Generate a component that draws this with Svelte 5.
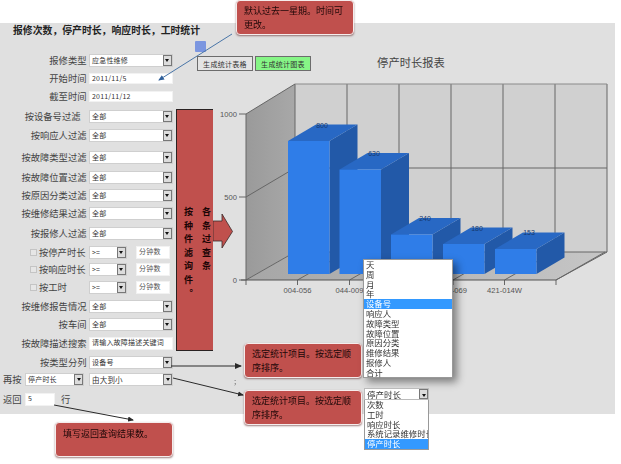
<script>
  // gap = distance from the previous row; rows are 14px high
  const rows = [
    { label: '报修类型', kind: 'sel', value: '应急性维修', gap: 0 },
    { label: '开始时间', kind: 'input', value: '2011/11/5', gap: 4 },
    { label: '截至时间', kind: 'input', value: '2011/11/12', gap: 4 },
    { label: '按设备号过滤', kind: 'sel', value: '全部', gap: 6, indent: true },
    { label: '按响应人过滤', kind: 'sel', value: '全部', gap: 5 },
    { label: '按故障类型过滤', kind: 'sel', value: '全部', gap: 8 },
    { label: '按故障位置过滤', kind: 'sel', value: '全部', gap: 6 },
    { label: '按原因分类过滤', kind: 'sel', value: '全部', gap: 4 },
    { label: '按维修结果过滤', kind: 'sel', value: '全部', gap: 4 },
    { label: '按报修人过滤', kind: 'sel', value: '全部', gap: 6 },
    { label: '按停产时长', kind: 'range', value: '>=', gap: 5, check: true },
    { label: '按响应时长', kind: 'range', value: '>=', gap: 3, check: true },
    { label: '按工时', kind: 'range', value: '>=', gap: 4, check: true },
    { label: '按维修报告情况', kind: 'sel', value: '全部', gap: 5 },
    { label: '按车间', kind: 'sel', value: '全部', gap: 4 },
    { label: '按故障描述搜索', kind: 'input', value: '请输入故障描述关键词', gap: 5, tall: true },
    { label: '按类型分列', kind: 'sel', value: '设备号', gap: 5 }
  ];

  const bars = [
    { x: 288, top: 141, label: '800', lx: 322, ly: 128 },
    { x: 339.5, top: 169.5, label: '630', lx: 374, ly: 156 },
    { x: 391, top: 234.5, label: '240', lx: 425, ly: 221 },
    { x: 443, top: 244, label: '180', lx: 477, ly: 231 },
    { x: 495, top: 249, label: '153', lx: 529, ly: 235 }
  ];
  const W = 41.5, DX = 28, DY = 16.5, BASE = 274;

  const wallX = [295, 347, 399, 451, 503, 555, 607];
  const floorX = [246, 297.5, 349.5, 401, 453, 504.5, 556];
  const cats = [[297.5, '004-056'], [349.5, '044-009'], [401, '004-012'], [453, '004-069'], [504.5, '421-014W']];
  const ticks = [[114, '1000'], [197, '500'], [280, '0']];

  const menu1 = ['天', '周', '月', '年', '设备号', '响应人', '故障类型', '故障位置', '原因分类', '维修结果', '报修人', '合计'];
  const menu2 = ['次数', '工时', '响应时长', '系统记录维修时长', '停产时长'];
</script>

<div class="page">
  <div class="panel">
    <section class="left">
      <h1>报修次数，停产时长，响应时长，工时统计</h1>
      <div class="form">
        {#each rows as r}
          <div class="row" style="margin-top:{r.gap}px">
            {#if r.check}
              <span class="check"></span>
              <label class="chk-label">{r.label}</label>
            {:else}
              <label class="label" class:indent={r.indent}>{r.label}</label>
            {/if}

            {#if r.kind === 'sel'}
              <div class="sel"><span>{r.value}</span><i class="btn"></i></div>
            {:else if r.kind === 'input'}
              <div class="input" class:tall={r.tall}>{r.value}</div>
            {:else}
              <div class="sel short"><span>{r.value}</span><i class="btn"></i></div>
              <div class="input mins">分钟数</div>
            {/if}
          </div>
        {/each}

        <div class="row again">
          <label class="side">再按</label>
          <div class="sel mid"><span>停产时长</span><i class="btn"></i></div>
          <div class="sel order"><span>由大到小</span><i class="btn"></i></div>
        </div>
        <div class="row back">
          <label class="side">返回</label>
          <div class="input num">5</div>
          <label class="unit">行</label>
        </div>
      </div>
    </section>

    <aside class="block">
      <span>各条过查条</span>
      <span>按种件滤询件。</span>
      <svg class="block-arrow" width="22" height="37" viewBox="0 0 22 37">
        <path d="M0 8H9V1L19.500 18.500L9 35V28H0Z" fill="#c0504d" stroke="#3a2a2a" stroke-width="0.8"/>
      </svg>
    </aside>

    <section class="report">
      <div class="tabs">
        <button class="tab">生成统计表格</button>
        <button class="tab on">生成统计图表</button>
      </div>
      <svg class="chart" width="422" height="240" viewBox="193 66 422 240">
        <defs>
          <linearGradient id="side" x1="0" x2="1" y1="0" y2="0">
            <stop offset="0" stop-color="#9a9a9a"/>
            <stop offset="1" stop-color="#a8a8a8"/>
          </linearGradient>
          <linearGradient id="floor" x1="0" x2="1" y1="0" y2="0">
            <stop offset="0" stop-color="#a6a6a6"/>
            <stop offset="1" stop-color="#c6c6c6"/>
          </linearGradient>
        </defs>

        <text class="title" x="411" y="67" text-anchor="middle">停产时长报表</text>

        <!-- walls -->
        <polygon points="295,84 607,84 607,252 295,252" fill="#d0d0d0"/>
        <polygon points="246,114 295,84 295,252 246,280" fill="url(#side)"/>
        <polygon points="246,280 295,252 607,252 556,280" fill="url(#floor)"/>

        {#each wallX as x}
          <line class="grid" x1={x} y1="84" x2={x} y2="252"/>
        {/each}
        <line class="grid" x1="295" y1="168" x2="607" y2="168"/>
        <line class="grid" x1="295" y1="252" x2="607" y2="252"/>
        <line class="edge" x1="295" y1="84" x2="607" y2="84"/>
        <line class="grid" x1="246" y1="197" x2="295" y2="168"/>
        <line class="grid" x1="246" y1="114" x2="295" y2="84"/>
        <line class="grid" x1="246" y1="114" x2="246" y2="280"/>
        <line class="grid" x1="556" y1="280" x2="607" y2="252"/>

        {#each floorX as x}
          <line class="grid" x1={x} y1="280" x2={x + 49} y2="252"/>
          <line class="grid" x1={x} y1="280" x2={x} y2="285"/>
        {/each}
        <line class="axis" x1="241" y1="280" x2="556" y2="280"/>

        {#each ticks as [y, t]}
          <line class="grid" x1="239" y1={y} x2="246" y2={y}/>
          <text class="tick" x="237" y={y + 2.5} text-anchor="end">{t}</text>
        {/each}

        {#each cats as [x, t]}
          <text class="tick" {x} y="293" text-anchor="middle">{t}</text>
        {/each}

        {#each bars as b}
          <polygon fill="#2259a8" points="{b.x + W},{b.top} {b.x + W + DX},{b.top - DY} {b.x + W + DX},{BASE - DY} {b.x + W},{BASE}"/>
          <polygon fill="#2868c4" points="{b.x},{b.top} {b.x + DX},{b.top - DY} {b.x + W + DX},{b.top - DY} {b.x + W},{b.top}"/>
          <rect fill="#2f7de8" x={b.x} y={b.top} width={W} height={BASE - b.top}/>
          <text class="val" x={b.lx} y={b.ly} text-anchor="middle">{b.label}</text>
        {/each}
      </svg>
    </section>
  </div>

  <!-- annotations laid over the form -->
  <i class="marker"></i>
  <svg class="arrows" width="621" height="464" viewBox="0 0 621 464">
    <defs>
      <marker id="head" markerWidth="6" markerHeight="6" refX="5" refY="3" orient="auto">
        <path d="M0 0.500L6 3L0 5.500Z" fill="#2a2a2a"/>
      </marker>
      <marker id="head-blue" markerWidth="6" markerHeight="6" refX="5" refY="3" orient="auto">
        <path d="M0 0.500L6 3L0 5.500Z" fill="#2f5f9a"/>
      </marker>
    </defs>
    <line x1="232" y1="34" x2="159" y2="80" stroke="#4a76a8" stroke-width="1" marker-end="url(#head-blue)"/>
    <line x1="171" y1="366" x2="241" y2="366" stroke="#2a2a2a" stroke-width="1.2" marker-end="url(#head)"/>
    <line x1="173" y1="378" x2="243" y2="395" stroke="#2a2a2a" stroke-width="1" marker-end="url(#head)"/>
    <line x1="54" y1="405" x2="133" y2="420" stroke="#2a2a2a" stroke-width="1" marker-end="url(#head)"/>
  </svg>

  <div class="note n1">默认过去一星期。时间可更改。</div>
  <div class="note n2">选定统计项目。按选定顺序排序。</div>
  <div class="note n3">选定统计项目。按选定顺序排序。</div>
  <div class="note n4">填写返回查询结果数。</div>
  <span class="semi">;</span>

  <ul class="menu m1">
    {#each menu1 as item}
      <li class:hit={item === '设备号'}>{item}</li>
    {/each}
  </ul>

  <div class="drop">
    <div class="sel drop-sel"><span>停产时长</span><i class="btn"></i></div>
    <ul class="menu m2">
      {#each menu2 as item}
        <li class:hit={item === '停产时长'}>{item}</li>
      {/each}
    </ul>
  </div>
</div>

<style>
  :global(body) {
    margin: 0;
    background: #fff;
  }

  .page {
    position: relative;
    width: 621px;
    height: 464px;
    overflow: hidden;
    filter: blur(0.4px);
    font-family: "Noto Sans CJK SC", "Liberation Sans", sans-serif;
    color: #444;
  }

  .panel {
    display: flex;
    margin-top: 23px;
    width: 615px;
    height: 391px;
    background: #e0e0e0;
  }

  .left {
    width: 175.5px;
    flex: none;
  }

  h1 {
    margin: 0;
    padding: 1px 0 0 13px;
    height: 30px;
    box-sizing: border-box;
    font-size: 9.85px;
    line-height: 13px;
    font-weight: 700;
    color: #222;
    white-space: nowrap;
  }

  .form {
    display: flex;
    flex-direction: column;
  }

  .row {
    display: flex;
    align-items: center;
    height: 14px;
    font-size: 9.3px;
  }

  .label {
    width: 86.5px;
    margin-right: 2.5px;
    text-align: right;
    white-space: nowrap;
    flex: none;
  }

  .label.indent {
    width: 80.5px;
    margin-right: 8.5px;
  }

  .check {
    width: 7px;
    height: 7px;
    margin-left: 30px;
    margin-right: 2px;
    background: #e6e6e6;
    border: 1px solid #c4c4c4;
    box-sizing: border-box;
    flex: none;
  }

  .chk-label {
    width: 50px;
    white-space: nowrap;
    flex: none;
  }

  .sel,
  .input {
    box-sizing: border-box;
    height: 13px;
    background: #fff;
    border: 1px solid #cfcfcf;
    font-size: 7px;
    line-height: 11px;
    color: #333;
    padding-left: 2px;
    letter-spacing: 0.2px;
    white-space: nowrap;
    overflow: hidden;
  }

  .sel {
    display: flex;
    justify-content: space-between;
    width: 83.5px;
    flex: none;
    padding-right: 0;
  }

  .input {
    width: 83.5px;
    height: 11px;
    line-height: 9px;
    border-color: #f2f2f2;
    flex: none;
  }

  .input.tall {
    height: 13px;
    line-height: 9px;
  }

  .sel.short {
    width: 37.5px;
  }

  .input.mins {
    width: 34px;
    height: 13px;
    margin-left: 9.5px;
    line-height: 8px;
    color: #555;
    padding-left: 2px;
  }

  .btn {
    position: relative;
    width: 9px;
    flex: none;
    background: #dcdcdc;
    border: 1px solid #777;
    box-sizing: border-box;
  }

  .btn::after {
    content: "";
    position: absolute;
    left: 1.5px;
    top: 3.5px;
    border: 2px solid transparent;
    border-top: 3px solid #111;
    border-bottom: 0;
  }

  .again {
    margin-top: 3px;
  }

  .back {
    margin-top: 6px;
  }

  .side {
    width: 22px;
    padding-left: 3px;
    white-space: nowrap;
    flex: none;
  }

  .sel.mid {
    width: 59px;
  }

  .sel.order {
    width: 84px;
    margin-left: 5px;
    font-size: 7.5px;
  }

  .input.num {
    width: 30px;
    height: 13px;
    border-color: #f2f2f2;
  }

  .unit {
    margin-left: 6px;
  }

  .block {
    position: relative;
    box-sizing: border-box;
    width: 37.5px;
    height: 242px;
    margin-top: 86px;
    flex: none;
    background: #c0504d;
    border: solid #2a2222;
    border-width: 1px 0 1px 1px;
    writing-mode: vertical-rl;
    padding-top: 97px;
    font-size: 9px;
    line-height: 14px;
    font-weight: 700;
    letter-spacing: 4.6px;
    color: #1a0505;
  }

  .block span {
    display: block;
    margin-left: 4px;
    white-space: nowrap;
  }

  .block-arrow {
    position: absolute;
    left: 36px;
    top: 103px;
  }

  .report {
    width: 402px;
    margin-left: -20px;
    padding-left: 8px;
    flex: none;
  }

  .tabs {
    display: flex;
    gap: 2px;
    margin: 33px 0 0 -4px;
    height: 15px;
    position: relative;
    z-index: 1;
  }

  .tab {
    box-sizing: border-box;
    width: 56px;
    height: 15px;
    padding: 0;
    background: #e4e4e4;
    border: 1px solid #6c6c6c;
    font: 7px "Noto Sans CJK SC", sans-serif;
    letter-spacing: 0.3px;
    color: #333;
  }

  .tab.on {
    background: #86f586;
  }

  .chart {
    display: block;
    margin: -5px 0 0 -8px;
    overflow: visible;
  }

  .title {
    font-size: 11.3px;
    fill: #444;
  }

  .grid {
    stroke: #666;
    stroke-width: 1;
  }

  .edge {
    stroke: #8a8a8a;
    stroke-width: 1;
  }

  .axis {
    stroke: #555;
    stroke-width: 1.2;
  }

  .tick {
    font: 7.6px "Liberation Sans", sans-serif;
    fill: #555;
  }

  .val {
    font: 7px "Liberation Sans", sans-serif;
    fill: #163a70;
  }

  .marker {
    position: absolute;
    left: 195px;
    top: 41px;
    width: 11px;
    height: 11px;
    background: #7b96e0;
    border-radius: 1px;
  }

  .arrows {
    position: absolute;
    left: 0;
    top: 0;
    pointer-events: none;
  }

  .note {
    position: absolute;
    box-sizing: border-box;
    width: 118px;
    height: 35px;
    padding: 3px 7px;
    background: #c0504d;
    border: 1.5px solid #f5ecec;
    border-radius: 4px;
    box-shadow: 0 1px 2px rgba(90, 40, 40, 0.6);
    font-size: 9px;
    line-height: 13.5px;
    color: #1d0808;
  }

  .n1 { left: 236px; top: 0; }
  .n2 { left: 244px; top: 343px; }
  .n3 { left: 244px; top: 390px; }
  .n4 { left: 55px; top: 422px; padding-top: 4px; }

  .semi {
    position: absolute;
    left: 234px;
    top: 375px;
    font-size: 8px;
    color: #666;
  }

  .menu {
    margin: 0;
    padding: 0;
    list-style: none;
    background: #fff;
    font-size: 8.4px;
    line-height: 9.8px;
    color: #333;
  }

  .menu li {
    padding-left: 2px;
    height: 9.8px;
    white-space: nowrap;
  }

  .menu li.hit {
    background: #3399ff;
    color: #fff;
  }

  .m1 {
    position: absolute;
    left: 363px;
    top: 259px;
    width: 90px;
    height: 119px;
    box-sizing: border-box;
    border: 1px solid #999;
    box-shadow: 4px 4px 8px rgba(0, 0, 0, 0.45);
  }

  .drop {
    position: absolute;
    left: 364px;
    top: 388px;
    width: 65px;
  }

  .sel.drop-sel {
    width: 65px;
    height: 12px;
    font-size: 8.5px;
    line-height: 10px;
    border-color: #bbb;
    color: #333;
    letter-spacing: 0;
  }

  .m2 {
    border: 1px solid #999;
    border-top: 0;
    box-sizing: border-box;
    overflow: hidden;
  }
</style>
